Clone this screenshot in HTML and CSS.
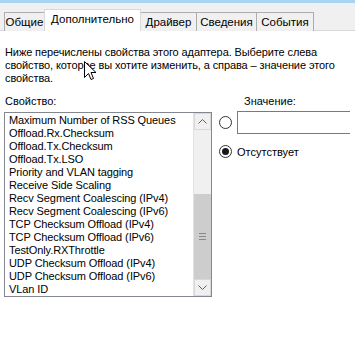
FILE: index.html
```html
<!DOCTYPE html>
<html lang="ru">
<head>
    <meta charset="UTF-8">
    <title>Свойства адаптера</title>
    <link rel="stylesheet" href="styles.css">
</head>
<body>
    <div class="top-line"></div>
    <div class="tabstrip">
        <div class="tab tab-general">Общие</div>
        <div class="tab tab-advanced active">Дополнительно</div>
        <div class="tab tab-driver">Драйвер</div>
        <div class="tab tab-details">Сведения</div>
        <div class="tab tab-events">События</div>
    </div>

    <div class="panel">
        <p class="description">
            Ниже перечислены свойства этого адаптера. Выберите слева<br>
            свойство, которое вы хотите изменить, а справа – значение этого<br>
            свойства.
        </p>

        <div class="fields">
            <div class="field-left">
                <div class="label">Свойство:</div>
                <div class="listbox">
                    <ul class="items">
                        <li>Maximum Number of RSS Queues</li>
                        <li>Offload.Rx.Checksum</li>
                        <li>Offload.Tx.Checksum</li>
                        <li>Offload.Tx.LSO</li>
                        <li>Priority and VLAN tagging</li>
                        <li>Receive Side Scaling</li>
                        <li>Recv Segment Coalescing (IPv4)</li>
                        <li>Recv Segment Coalescing (IPv6)</li>
                        <li>TCP Checksum Offload (IPv4)</li>
                        <li>TCP Checksum Offload (IPv6)</li>
                        <li>TestOnly.RXThrottle</li>
                        <li>UDP Checksum Offload (IPv4)</li>
                        <li>UDP Checksum Offload (IPv6)</li>
                        <li>VLan ID</li>
                    </ul>
                    <div class="scrollbar">
                        <div class="sb-btn">
                            <svg width="9" height="5" viewBox="0 0 9 5"><path d="M0.5 4.5 L4.5 0.5 L8.5 4.5" fill="none" stroke="#606060" stroke-width="1"/></svg>
                        </div>
                        <div class="sb-track">
                            <div class="sb-thumb">
                                <span class="grip"></span>
                                <span class="grip"></span>
                                <span class="grip"></span>
                            </div>
                        </div>
                        <div class="sb-btn">
                            <svg width="9" height="5" viewBox="0 0 9 5"><path d="M0.5 0.5 L4.5 4.5 L8.5 0.5" fill="none" stroke="#606060" stroke-width="1"/></svg>
                        </div>
                    </div>
                </div>
            </div>

            <div class="field-right">
                <div class="label value-label">Значение:</div>
                <div class="radio-row">
                    <span class="radio"></span>
                    <div class="textbox"></div>
                </div>
                <div class="radio-row second">
                    <span class="radio checked"></span>
                    <span>Отсутствует</span>
                </div>
            </div>
        </div>
    </div>

    <svg class="cursor" width="13" height="20" viewBox="0 0 13 20">
        <path d="M0.5 0.5 L0.5 16.5 L4.5 12.5 L7 18.5 L9.5 17.5 L7 11.5 L12 11.5 Z" fill="#fff" stroke="#000" stroke-width="1"/>
    </svg>
</body>
</html>
```

FILE: styles.css
```css
* {
    margin: 0;
    padding: 0;
    box-sizing: border-box;
}

body {
    font-family: "Liberation Sans", Arial, sans-serif;
    font-size: 11px;
    color: #000;
    background: #fff;
    width: 355px;
    height: 358px;
    overflow: hidden;
    position: relative;
}

.top-line {
    height: 3px;
    background: #a9d3f2;
}

.tabstrip {
    height: 28px;
    background: #f0f0f0;
    display: flex;
    align-items: flex-end;
    padding-left: 4px;
    border-bottom: 1px solid #d9d9d9;
}

.tab {
    height: 19px;
    line-height: 18px;
    text-align: center;
    border: 1px solid #adadad;
    border-bottom: none;
    background: #f0f0f0;
    margin-left: -1px;
    margin-bottom: -1px;
    white-space: nowrap;
    font-size: 11.5px;
}

.tab:first-child {
    margin-left: 0;
}

.tab-general { width: 41px; }
.tab-advanced { width: 97px; }
.tab-driver { width: 57px; }
.tab-details { width: 61px; }
.tab-events { width: 58px; }

.tab.active {
    height: 22px;
    line-height: 19px;
    background: #fff;
    border-color: #d9d9d9;
    position: relative;
    z-index: 1;
}

.panel {
    padding: 15px 5px 0 5px;
}

.description {
    line-height: 13px;
    font-size: 11px;
    letter-spacing: -0.1px;
    white-space: nowrap;
}

.fields {
    display: flex;
    margin-top: 9px;
}

.field-left {
    width: 208px;
    margin-left: -1px;
}

.label {
    line-height: 14px;
    padding-left: 1px;
    margin-bottom: 4px;
}

.listbox {
    display: flex;
    height: 185px;
    border: 1px solid #828790;
    background: #fff;
}

.items {
    list-style: none;
    flex: 1;
    padding: 1px 0 0 4px;
    overflow: hidden;
}

.items li {
    height: 13px;
    line-height: 13px;
    white-space: nowrap;
    font-size: 11px;
    letter-spacing: -0.1px;
}

.scrollbar {
    width: 18px;
    display: flex;
    flex-direction: column;
    border-left: 1px solid #e3e3e3;
    background: #f0f0f0;
}

.sb-btn {
    height: 17px;
    display: flex;
    align-items: center;
    justify-content: center;
    background: #f0f0f0;
    border: 1px solid #d8d8d8;
}

.sb-track {
    flex: 1;
    display: flex;
    flex-direction: column;
    justify-content: flex-end;
}

.sb-thumb {
    height: 85px;
    background: #cdcdcd;
    display: flex;
    flex-direction: column;
    align-items: center;
    justify-content: center;
    gap: 2px;
}

.grip {
    width: 7px;
    height: 1px;
    background: #888;
}

.field-right {
    flex: 1;
    padding-left: 7px;
    overflow: hidden;
}

.value-label {
    padding-left: 25px;
    margin-bottom: 3px;
}

.radio-row {
    display: flex;
    align-items: center;
    gap: 5px;
}

.radio-row.second {
    margin-top: 11px;
}

.radio {
    width: 13px;
    height: 13px;
    border-radius: 50%;
    border: 1px solid #333;
    background: #fff;
    display: flex;
    align-items: center;
    justify-content: center;
    flex-shrink: 0;
}

.radio.checked::after {
    content: "";
    width: 7px;
    height: 7px;
    border-radius: 50%;
    background: #1a1a1a;
}

.textbox {
    flex: 1;
    height: 23px;
    border: 1px solid #7a7a7a;
    border-right: none;
    background: #fff;
}

.cursor {
    position: absolute;
    left: 84px;
    top: 61px;
}
```
